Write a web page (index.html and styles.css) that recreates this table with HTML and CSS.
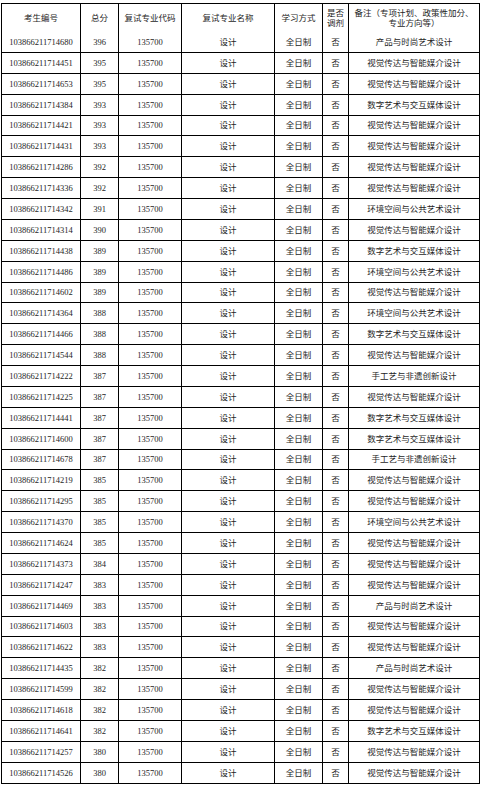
FILE: index.html
```html
<!DOCTYPE html>
<html lang="zh-CN">
<head>
<meta charset="utf-8">
<title>复试名单</title>
<link rel="stylesheet" href="styles.css">
</head>
<body>
<table class="list">
  <colgroup>
    <col class="c-id"><col class="c-score"><col class="c-code"><col class="c-name"><col class="c-mode"><col class="c-adj"><col class="c-note">
  </colgroup>
  <thead>
    <tr class="head">
      <th>考生编号</th>
      <th>总分</th>
      <th>复试专业代码</th>
      <th>复试专业名称</th>
      <th>学习方式</th>
      <th>是否<br>调剂</th>
      <th>备注（专项计划、政策性加分、<br>专业方向等）</th>
    </tr>
  </thead>
  <tbody>
    <tr class="first"><td>103866211714680</td><td>396</td><td>135700</td><td>设计</td><td>全日制</td><td>否</td><td>产品与时尚艺术设计</td></tr>
    <tr><td>103866211714451</td><td>395</td><td>135700</td><td>设计</td><td>全日制</td><td>否</td><td>视觉传达与智能媒介设计</td></tr>
    <tr><td>103866211714653</td><td>395</td><td>135700</td><td>设计</td><td>全日制</td><td>否</td><td>视觉传达与智能媒介设计</td></tr>
    <tr><td>103866211714384</td><td>393</td><td>135700</td><td>设计</td><td>全日制</td><td>否</td><td>数字艺术与交互媒体设计</td></tr>
    <tr><td>103866211714421</td><td>393</td><td>135700</td><td>设计</td><td>全日制</td><td>否</td><td>视觉传达与智能媒介设计</td></tr>
    <tr><td>103866211714431</td><td>393</td><td>135700</td><td>设计</td><td>全日制</td><td>否</td><td>视觉传达与智能媒介设计</td></tr>
    <tr><td>103866211714286</td><td>392</td><td>135700</td><td>设计</td><td>全日制</td><td>否</td><td>视觉传达与智能媒介设计</td></tr>
    <tr><td>103866211714336</td><td>392</td><td>135700</td><td>设计</td><td>全日制</td><td>否</td><td>视觉传达与智能媒介设计</td></tr>
    <tr><td>103866211714342</td><td>391</td><td>135700</td><td>设计</td><td>全日制</td><td>否</td><td>环境空间与公共艺术设计</td></tr>
    <tr><td>103866211714314</td><td>390</td><td>135700</td><td>设计</td><td>全日制</td><td>否</td><td>视觉传达与智能媒介设计</td></tr>
    <tr><td>103866211714438</td><td>389</td><td>135700</td><td>设计</td><td>全日制</td><td>否</td><td>数字艺术与交互媒体设计</td></tr>
    <tr><td>103866211714486</td><td>389</td><td>135700</td><td>设计</td><td>全日制</td><td>否</td><td>环境空间与公共艺术设计</td></tr>
    <tr><td>103866211714602</td><td>389</td><td>135700</td><td>设计</td><td>全日制</td><td>否</td><td>视觉传达与智能媒介设计</td></tr>
    <tr><td>103866211714364</td><td>388</td><td>135700</td><td>设计</td><td>全日制</td><td>否</td><td>环境空间与公共艺术设计</td></tr>
    <tr><td>103866211714466</td><td>388</td><td>135700</td><td>设计</td><td>全日制</td><td>否</td><td>数字艺术与交互媒体设计</td></tr>
    <tr><td>103866211714544</td><td>388</td><td>135700</td><td>设计</td><td>全日制</td><td>否</td><td>视觉传达与智能媒介设计</td></tr>
    <tr><td>103866211714222</td><td>387</td><td>135700</td><td>设计</td><td>全日制</td><td>否</td><td>手工艺与非遗创新设计</td></tr>
    <tr><td>103866211714225</td><td>387</td><td>135700</td><td>设计</td><td>全日制</td><td>否</td><td>视觉传达与智能媒介设计</td></tr>
    <tr><td>103866211714441</td><td>387</td><td>135700</td><td>设计</td><td>全日制</td><td>否</td><td>数字艺术与交互媒体设计</td></tr>
    <tr><td>103866211714600</td><td>387</td><td>135700</td><td>设计</td><td>全日制</td><td>否</td><td>数字艺术与交互媒体设计</td></tr>
    <tr><td>103866211714678</td><td>387</td><td>135700</td><td>设计</td><td>全日制</td><td>否</td><td>手工艺与非遗创新设计</td></tr>
    <tr><td>103866211714219</td><td>385</td><td>135700</td><td>设计</td><td>全日制</td><td>否</td><td>视觉传达与智能媒介设计</td></tr>
    <tr><td>103866211714295</td><td>385</td><td>135700</td><td>设计</td><td>全日制</td><td>否</td><td>视觉传达与智能媒介设计</td></tr>
    <tr><td>103866211714370</td><td>385</td><td>135700</td><td>设计</td><td>全日制</td><td>否</td><td>环境空间与公共艺术设计</td></tr>
    <tr><td>103866211714624</td><td>385</td><td>135700</td><td>设计</td><td>全日制</td><td>否</td><td>视觉传达与智能媒介设计</td></tr>
    <tr><td>103866211714373</td><td>384</td><td>135700</td><td>设计</td><td>全日制</td><td>否</td><td>视觉传达与智能媒介设计</td></tr>
    <tr><td>103866211714247</td><td>383</td><td>135700</td><td>设计</td><td>全日制</td><td>否</td><td>视觉传达与智能媒介设计</td></tr>
    <tr><td>103866211714469</td><td>383</td><td>135700</td><td>设计</td><td>全日制</td><td>否</td><td>产品与时尚艺术设计</td></tr>
    <tr><td>103866211714603</td><td>383</td><td>135700</td><td>设计</td><td>全日制</td><td>否</td><td>视觉传达与智能媒介设计</td></tr>
    <tr><td>103866211714622</td><td>383</td><td>135700</td><td>设计</td><td>全日制</td><td>否</td><td>视觉传达与智能媒介设计</td></tr>
    <tr><td>103866211714435</td><td>382</td><td>135700</td><td>设计</td><td>全日制</td><td>否</td><td>产品与时尚艺术设计</td></tr>
    <tr><td>103866211714599</td><td>382</td><td>135700</td><td>设计</td><td>全日制</td><td>否</td><td>视觉传达与智能媒介设计</td></tr>
    <tr><td>103866211714618</td><td>382</td><td>135700</td><td>设计</td><td>全日制</td><td>否</td><td>视觉传达与智能媒介设计</td></tr>
    <tr><td>103866211714641</td><td>382</td><td>135700</td><td>设计</td><td>全日制</td><td>否</td><td>数字艺术与交互媒体设计</td></tr>
    <tr><td>103866211714257</td><td>380</td><td>135700</td><td>设计</td><td>全日制</td><td>否</td><td>视觉传达与智能媒介设计</td></tr>
    <tr><td>103866211714526</td><td>380</td><td>135700</td><td>设计</td><td>全日制</td><td>否</td><td>视觉传达与智能媒介设计</td></tr>
  </tbody>
</table>
</body>
</html>
```
FILE: styles.css
```css
html, body {
  margin: 0;
  padding: 0;
  background: #fff;
}

body {
  padding: 3px 0 0 1px;
}

.list {
  border-collapse: collapse;
  table-layout: fixed;
  width: 479px;
  font-family: "Liberation Serif", "Noto Sans CJK SC", serif;
  font-size: 8.5px;
  line-height: 10px;
  color: #1e1e1e;
}

.c-id { width: 79px; }
.c-score { width: 38px; }
.c-code { width: 63px; }
.c-name { width: 93px; }
.c-mode { width: 48px; }
.c-adj { width: 26px; }
.c-note { width: 131px; }

.list th,
.list td {
  border: 1px solid #000;
  padding: 0;
  text-align: center;
  vertical-align: middle;
  font-weight: normal;
  white-space: nowrap;
}

.head {
  height: 28px;
}

.head th {
  border-bottom: hidden;
}

.list tbody tr {
  height: 20.886px;
}
```
